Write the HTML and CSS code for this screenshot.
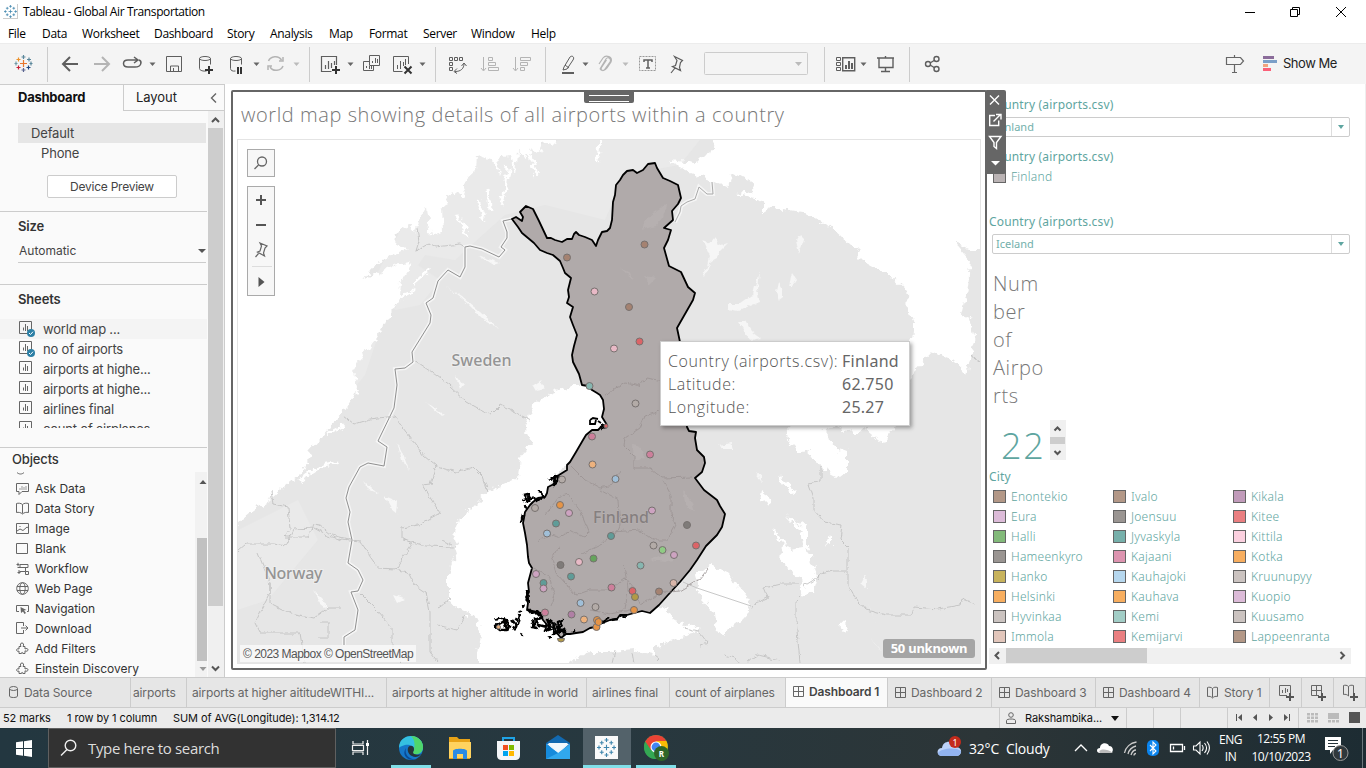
FILE: index.html
```html
<!DOCTYPE html>
<html lang="en">
<head>
<meta charset="utf-8">
<title>Tableau - Global Air Transportation</title>
<link rel="stylesheet" href="styles.css">
</head>
<body>
<svg class="defs" width="0" height="0" aria-hidden="true">
  <defs>
    <symbol id="sheet" viewBox="0 0 18 18"><path d="M1.500 1.500h12v12h-12zM5.500 10.500v-3M7.500 11v-7M9.500 11v-5"/></symbol>
    <symbol id="check" viewBox="0 0 8 8"><circle cx="4" cy="4" r="4" fill="#2c7fa5"/><path d="M2 4l1.500 1.500L6 2.700" fill="none" stroke="#fff"/></symbol>
    <symbol id="grid" viewBox="0 0 11 11"><path d="M.5.5h10v10H.5zM5.500.5v10M.5 5.500h10" fill="none" stroke="#666"/></symbol>
    <symbol id="mark" viewBox="0 0 24 24"><path d="M12 8.500v7M8.500 12h7M12 0v5M9.500 2.500h5M12 19v5M9.500 21.500h5M2.500 9.500v5M0 12h5M21.500 9.500v5M19 12h5M6 3.500v5M3.500 6h5M18 3.500v5M15.500 6h5M6 15.500v5M3.500 18h5M18 15.500v5M15.500 18h5" fill="none" stroke="#3f86ad" stroke-width="1.400"/></symbol>
    <symbol id="puzzle" viewBox="0 0 13 13"><path d="M3 4.500h2C3.800 2.500 4.500 1 6 1s2.200 1.500 1 3.500h2V7c1.500-1 3-.5 3 .8S10.500 9.700 9 8.800v2.700H6.800c.5-1.500-1.800-1.500-1.300 0H3V9C1.500 9.700.6 9 .6 8S1.500 6.500 3 7z" fill="none" stroke="#666"/></symbol>
    <filter id="rough" x="-5%" y="-5%" width="110%" height="110%"><feTurbulence type="fractalNoise" baseFrequency=".13" numOctaves="4" seed="7"/><feDisplacementMap in="SourceGraphic" scale="11" xChannelSelector="R" yChannelSelector="G"/></filter>
    <filter id="rough2" x="-5%" y="-5%" width="110%" height="110%"><feTurbulence type="fractalNoise" baseFrequency=".16" numOctaves="3" seed="3"/><feDisplacementMap in="SourceGraphic" scale="5" xChannelSelector="R" yChannelSelector="G"/></filter>
  </defs>
</svg>

<header class="titlebar">
  <span class="applogo"><svg width="13" height="13"><use href="#mark"/></svg></span>
  <span class="apptitle">Tableau - Global Air Transportation</span>
  <svg class="winbtns" width="106" height="20" viewBox="1245 0 106 20" fill="none" stroke="#000"><path d="M1245 10.500h10M1290.500 7.500h7v7h-7zM1292.500 7.500v-2h7v7h-2M1336 5l10 10M1346 5l-10 10"/></svg>
</header>
<nav class="menubar"><span>File</span><span>Data</span><span>Worksheet</span><span>Dashboard</span><span>Story</span><span>Analysis</span><span>Map</span><span>Format</span><span>Server</span><span>Window</span><span>Help</span></nav>

<div class="toolbar">
  <svg class="tools" width="984" height="40" viewBox="0 44 984 40" fill="none" stroke="#5e5e5e">
    <g stroke="#ccc"><path d="M47.500 47v35M309.500 47v35M435.500 47v35M545.500 47v35M824.500 47v35M909.500 47v35"/></g>
    <g stroke-width="1.200">
      <path stroke="#e8762d" d="M23.500 60v7M20 63.500h7"/><path stroke="#5b879b" d="M23.500 55v4M21.500 57h4M29 57.500v4M27 59.500h4M31 61.500v4M29.500 63.500h3"/>
      <path stroke="#eb912c" d="M18.500 57.500v4M16.500 59.500h4"/><path stroke="#7199a6" d="M16 61.500v4M14.500 63.500h3"/><path stroke="#c72035" d="M18.500 65.500v4M16.500 67.500h4"/><path stroke="#1f457e" d="M28.500 65.500v4M26.500 67.500h4"/><path stroke="#5b6591" d="M23.500 68v4M21.500 70h4"/>
    </g>
    <path stroke-width="2" d="M78 64H63M70 57l-7 7 7 7"/><path stroke="#b4b4b4" stroke-width="2" d="M94 64h15M102 57l7 7-7 7"/>
    <path stroke-width="1.500" d="M135 67h-7c-6 0-6-7 0-7h9M134 57l4 3-4 3M135 67c7 0 7-6 4-7"/>
    <path d="M166.500 56.500h15v15h-15zM170.500 71v-5h8v5M173.500 68v3"/>
    <path d="M199.500 58.500v10c0 2 4 3 7 2.500M210.500 58.500v6"/><ellipse cx="205" cy="58.500" rx="5.500" ry="2"/>
    <path stroke="#333" stroke-width="2" d="M209 66v8M205 70h8"/>
    <path d="M230.500 58.500v10c0 2 2 3 5 2.500M241.500 58.500v6"/><ellipse cx="236" cy="58.500" rx="5.500" ry="2"/><path stroke="#333" stroke-width="2" d="M238 67v7M241 67v7"/>
    <path stroke="#b4b4b4" stroke-width="1.500" d="M268.500 61c2-5 10-6 13-1M283 66c-2 5-10 6-13 1M283 57v4h-4M268 70v-4h4"/>
    <path d="M336.500 65v-8.500h-15v15h10M325.500 69v-4M328.500 69v-8M331.500 68v-5M334.500 65v-4" stroke-width="1.200"/><path stroke="#333" stroke-width="2" d="M336 66v8M332 70h8"/>
    <path d="M369.500 55.500h10v10h-10zM369 61.500h-5.500v9h10V66M372.500 63v-2M375.500 63v-5M377.500 63v-4M366.500 68v-2M369.500 69v-3M371.500 69v-3"/>
    <path d="M408.500 64v-7.500h-15v15h9M397.500 69v-4M400.500 69v-8M403.500 66v-4M405.500 65v-6"/><path stroke="#333" stroke-width="2" d="M404.500 66.500l7 7M411.500 66.500l-7 7"/>
    <path d="M449.500 57.500h3v3h-3zM454.500 57.500h3v3h-3zM459.500 57.500h3v3h-3zM449.500 62.500h3v3h-3zM449.500 67.500h3v3h-3zM455 71.500c6 0 9-3 9-8M457 68.500l-3 3 3 2M461.500 66l2.500-3 2.500 3"/>
    <g stroke="#b4b4b4"><path d="M483.500 57v13M481 68l2.500 3 2.500-3M488.500 57.500h4v3h-4zM488.500 62.500h7v3h-7zM488.500 67.500h10v3h-10zM515.500 57v13M513 68l2.500 3 2.500-3M520.500 57.500h10v3h-10zM520.500 62.500h7v3h-7zM520.500 67.500h4v3h-4z"/><path stroke-width="1.200" d="M600 69l6-10c2-3 6 0 4 3l-5 7c-2 3-5 1-3.500-1.500l5-7.500M599 64l4-6c3-4 10-1 8 4l-4 6c-2 3-5 3-7 1"/></g>
    <path d="M564 67l6-10c2-2 5 0 3 3l-6 9-4 1zM565 65l4 3"/><path stroke-width="2" d="M562 73h12"/>
    <rect x="639.500" y="56.500" width="16" height="14" stroke-dasharray="2 1" stroke="#999"/><path stroke-width="1.500" d="M644 62v-2h8v2M648 60v8M646 68h4"/>
    <path d="M674.500 56.500l8 4-2 2-1 5 1 3-8-4 3-1 1.500-5zM675 68l-4 5" stroke-width="1.200"/>
    <rect x="704.500" y="52.500" width="103" height="22" rx="1" stroke="#ccc"/>
    <path d="M836.500 57.500h4v3h-4zM836.500 62.500h4v3h-4zM836.500 67.500h4v3h-4z"/><path stroke-width="1.400" d="M842.700 57.700h12v13h-12z"/><path stroke-width="2" d="M846 69v-4M849 69v-8M852 69v-6"/>
    <path stroke-width="1.400" d="M877 58h17M879 58v9.500h14V58M885.500 56v2M885.500 67v4M881 71.500h9"/>
    <g stroke-width="1.400"><circle cx="928" cy="64" r="2.500"/><circle cx="936.500" cy="59" r="2.500"/><circle cx="936.500" cy="69" r="2.500"/><path d="M930 63l5-3M930 65l5 3"/></g>
    <g stroke="none" fill="#666"><path d="M149.500 62.500h6l-3 3.500zM253.500 62.500h6l-3 3.500zM347.500 62.500h6l-3 3.500zM419.500 62.500h6l-3 3.500zM582.500 62.500h6l-3 3.500zM860.500 62.500h6l-3 3.500z"/><path fill="#bbb" d="M293.500 62.500h6l-3 3.500zM622.500 62.500h6l-3 3.500zM795 62h7l-3.500 4z"/></g>
  </svg>
  <div class="showme">
    <svg width="56" height="24" viewBox="1224 51 56 24"><path d="M1234.500 55v3M1234.500 65v8M1232 72.500h5M1226.500 57.500h14l3 3.500-3 3.500h-14z" fill="none" stroke="#666" stroke-width="1.200"/><path fill="#8b6c9a" d="M1263 56h11v3h-11z"/><path fill="#7b9fc8" d="M1263 60h14v3h-14z"/><path fill="#f1a37e" d="M1263 64h5v3h-5z"/><path fill="#fb6078" d="M1263 68h8v3h-8z"/></svg>
    <span>Show Me</span>
  </div>
</div>

<main class="body">
  <aside class="side">
    <div class="sidetabs"><b>Dashboard</b><span>Layout<svg width="8" height="12"><path d="M6 1.500L1.500 6 6 10.500" fill="none" stroke="#666" stroke-width="1.400"/></svg></span></div>
    <div class="sidebody">
      <div class="panel">
        <div class="devices"><div class="dev on">Default</div><div class="dev sub">Phone</div><button class="preview">Device Preview</button></div>
        <div class="size"><h3>Size</h3><div class="select">Automatic<i class="tri"></i></div></div>
        <div class="sheets"><h3>Sheets</h3>
          <div class="sheetlist">
            <div class="srow hl"><svg class="ic"><use href="#sheet"/><use href="#check" x="9" y="9" width="8" height="8"/></svg>world map ...</div>
            <div class="srow"><svg class="ic"><use href="#sheet"/><use href="#check" x="9" y="9" width="8" height="8"/></svg>no of airports</div>
            <div class="srow"><svg class="ic"><use href="#sheet"/></svg>airports at highe...</div>
            <div class="srow"><svg class="ic"><use href="#sheet"/></svg>airports at highe...</div>
            <div class="srow"><svg class="ic"><use href="#sheet"/></svg>airlines final</div>
            <div class="srow"><svg class="ic"><use href="#sheet"/></svg>count of airplanes</div>
          </div>
        </div>
        <div class="objects"><h3>Objects</h3>
          <div class="objwrap">
            <div class="objlist">
              <svg class="peek" width="13" height="6" fill="none" stroke="#666"><path d="M1 .5c2 2 5 2 7 0"/></svg>
              <div class="orow"><svg class="oi"><path d="M.5 1.500h12v8H6l-3 3v-3H.5z"/><path d="M4 8V6M6 8V4M8 8V5M10 8V4" stroke="#999"/></svg>Ask Data</div>
              <div class="orow"><svg class="oi"><path d="M6.500 2.500C5 1 2 1 .5 1.500v9c2-.5 4.500 0 6 1.500 1.500-1.500 4-2 6-1.500v-9c-2-.5-4.500-.5-6 1zM6.500 2.500v9"/></svg>Data Story</div>
              <div class="orow"><svg class="oi"><path d="M.5 1.500h12v10H.5zM1 9l3-2 3 1.500L11 5l1.500 1M3.500 4.500h1"/></svg>Image</div>
              <div class="orow"><svg class="oi"><path d="M.5 1.500h11v10H.5z"/></svg>Blank</div>
              <div class="orow"><svg class="oi"><path d="M4 2.500h8v3h-8zM1.500 5.500h8v4h-6M2 .8v3.400M.5 2.500h3M9.500 9.500v3h3v-3zM3 8v4M1.500 10.500h3"/></svg>Workflow</div>
              <div class="orow"><svg class="oi"><circle cx="6.500" cy="6.500" r="5.800"/><ellipse cx="6.500" cy="6.500" rx="2.700" ry="5.800"/><path d="M1 4.500h11M1 8.500h11"/></svg>Web Page</div>
              <div class="orow"><svg class="oi"><path d="M3 9.500H.5v-6h12v6H11"/><path d="M4.500 5l6 3-2.500.5L10 11 8.500 12 7 9.500 5 11z" fill="#666" stroke="none"/></svg>Navigation</div>
              <div class="orow"><svg class="oi"><path d="M7.500 4V.5h-7v11h7V8M5 6h7M9.500 3.500L12 6 9.500 8.500"/></svg>Download</div>
              <div class="orow"><svg class="oi"><use href="#puzzle"/></svg>Add Filters</div>
              <div class="orow"><svg class="oi"><use href="#puzzle"/></svg>Einstein Discovery</div>
            </div>
            <div class="minibar"><svg width="12" height="204"><path d="M4.500 11h7L8 7z" fill="#555"/><path d="M2 65h10v123H2z" fill="#c1c1c1"/><path d="M4.500 194h7L8 198z" fill="#999"/></svg></div>
          </div>
        </div>
      </div>
      <div class="bigbar"><svg width="15" height="566" fill="none" stroke="#555" stroke-width="2"><path d="M0 17h15v478H0z" fill="#cdcdcd" stroke="none"/><path d="M4 11l3.500-3.500L11 11M4 555.500l3.500 3.500 3.500-3.500"/></svg></div>
    </div>
  </aside>

  <section class="work">
    <div class="sheetframe">
      <div class="grip"></div>
      <div class="frametools"><svg width="21" height="84" fill="none" stroke="#fff" stroke-width="1.400"><path d="M5 5.500l9 9M14 5.500l-9 9M10 25.500H4.700v10h9v-5M8.500 31.500l7-7M11 24.500h5v5M4.500 46.500h11.500l-4.500 6v6l-2.500-2v-4z"/><path d="M6 71h9l-4.500 4.500z" fill="#fff" stroke="none"/></svg></div>
      <h1>world map showing details of all airports within a country</h1>
      <div class="mapwrap">
        <svg class="map" width="742" height="523" viewBox="238 140 742 523">
          <rect x="238" y="140" width="742" height="523" fill="#e6e6e6"/>
          <g fill="#eeeeee" opacity=".5"><path d="M560 140l140 0-20 25-55 10-20 45-60-15-40 10-50 45-30-5-40 60-20 60-50 60-80 60v-20l120-160 80-150z"/><path d="M238 530l60-30 20 40-50 60-30 10zM410 260l30 20-20 25-25 5z"/></g>
          <g fill="#fff" filter="url(#rough)">
            <path d="M230 130H563L555 145 545 142 540 152 530 148 526 158 517 152 515 175 510 155 497 157 500 175 492 160 477 155 476 170 463 182 467 197 450 193 442 208 443 233 430 236 428 222 426 208 420 216 413 232 408 226 395 234 394 243 406 250 392 256 377 262 365 280 372 276 400 262 412 265 401 282 400 298 390 315 377 338 363 355 353 372 357 390 343 413 330 428 310 450 305 470 273 497 250 513 230 530z"/>
            <path d="M715 130L714 150 700 158 695 163 670 160 677 167 697 175 713 180 728 187 733 172 755 184 752 191 737 193 763 202 763 217 770 207 800 212 827 225 850 245 867 262 887 273 907 292 908 312 914 322 912 338 905 360 880 375 840 374 815 360 800 380 785 412 790 443 800 453 810 452 820 467 840 477 848 470 848 452 840 449 837 453 823 430 835 425 850 433 867 430 883 443 895 427 900 400 913 372 932 352 953 360 967 375 975 335 970 318 962 315 968 288 970 262 953 242 967 248 990 248 990 130z"/>
            <path d="M582 385L573 385 547 395 532 407 525 430 532 443 520 457 518 477 493 488 477 503 460 520 453 540 457 553 448 573 448 598 457 608 475 617 482 637 478 653 478 675H560L570 662 590 652 610 652 633 650 655 655 655 647 683 638 700 628 672 620 668 607 650 610 600 600 560 600 550 480 610 430 615 390z"/>
            <path d="M695 577L710 565 733 577 750 602 747 617 733 625 723 635 717 633 715 613 700 597zM785 515L807 527 807 547 818 577 813 593 803 597 800 577 782 563 783 543 770 530 777 532 790 550 803 548 800 530zM778 475l8 5 6 10 6 2-5 4-5-3-7-12zM762 490l10 8-4 6-8-3zM828 535l4 2 0 8-5-2zM836 625l8-4 6 6-5 6z"/>
            <path fill="none" stroke="#fff" stroke-width="3" d="M508 168l-3 22-4 14M488 190l2 20M478 200l7 20M457 215l12 22M530 150l6 26M600 140l-2 20M300 480l22-14 16-4M345 425l-18 10M400 300l14-10M412 285l18-16"/>
          </g>
          <g fill="#f6f6f6" filter="url(#rough2)"><path d="M703 240l8 3 4-5 3 8 10-3-8 8-4 8-6 4-3 10-5 3 6-10 2-10zM753 295l6-25-2 20 3 12-12 4-10 5-10-2 0-5 12 0zM800 235l4 4-5 14-3-12zM792 273l4 6-5 8-2 0zM738 321l8 0 6 10 10 8-12 2zM778 283l5 8 0 6-4 3-3-8zM755 472l7 3 0 6zM865 576l2 5 0 8-6-5zM718 445l14-2 2 6-9 0zM868 603l7 20-4-12zM870 638l12 14-4-4z"/></g>
          <g fill="#f7f7f7" filter="url(#rough2)"><path d="M447 287l15 10 18 15 12 10 6 6-14-8-18-18zM397 442l5 10 7 18-7-10zM384 496l14 6-1 12-6-5zM363 480l8 8 8 6-10-4zM426 402l18 12-4 1zM393 595l12 4-8 4zM313 590l10 10 6 10-8-6zM478 255l22 8-6 2zM455 375l8 10-3 4zM533 386l8-5 5 8-10 2z"/></g>
          <g fill="none" stroke="#f5f5f5" stroke-width="4"><path d="M512 219L503 221 507 232 507 238 501 247 505 250 499 257 482 249 470 246 465 247 465 267 460 277 448 270 438 281 433 298 426 303 431 315 430 323 412 352 413 362 405 368 395 369 397 385 394 408 378 441 387 447 384 466 368 463 360 467 349 487 346 498 350 512 348 522 352 540 348 563 358 570 363 580 358 591 351 592 358 610 355 630 344 637 344 645"/><path d="M675 222l5-10 1-6 6-4 8-3 4-12 8 7 6 0-1-12"/></g>
          <path fill="none" stroke="#8f8f8f" d="M512 219L503 221 507 232 507 238 501 247 505 250 499 257 482 249 470 246 465 247 465 267 460 277 448 270 438 281 433 298 426 303 431 315 430 323 412 352 413 362 405 368 395 369 397 385 394 408 378 441 387 447 384 466 368 463 360 467 349 487 346 498 350 512 348 522 352 540 348 563 358 570 363 580 358 591 351 592 358 610 355 630 344 637 344 645"/>
          <path fill="none" stroke="#aaa" d="M675 222l5-10 1-6 6-4 8-3 4-12 8 7 6 0-1-12"/>
          <path fill="none" stroke="#bdbdbd" stroke-width=".8" filter="url(#rough2)" d="M465 247l-5-3-25 3-7-3-12 7 3-10-2-13M413 360l20 13 16 12 18 17 23 13 10-10 30 15M394 416l-24 3-16 5-10-8M394 416l30 40 12 10 20 6 17-5 10 10 5 15M436 466l-6 18-8 1 18 28-22 12-16 3 0 10 10 6-8 12-8 13-18-1-18-26-18-2-14-4-14-8-20 1-8 17-12-2-28 0-14 12-16 1M442 540l10 5M403 540l24 6 28 1M352 540l-20-5-12-10-6-1-6 13-24 0 6-8-2-22-15-3-2-13M394 569l14 3 6 12 12 8 4 20 0 40 8 10M358 591l20 20 14 17 0 25 10 10M437 608l14-10M437 625l20 5 8-14M258 553l12 30 0 20 20 10 24 5 14-10 14 0M270 583l0 10-15 30 5 10 40 0 5 30M320 622l8 0 0 16-10 0M821 466l0 15-12 3 5 14 0 12 10 12 18 3-2 15 8 8 0 38 6 10 12 14 20 5 26 0 2-8 24 2 22-4 2-6 14 5M847 571l-14 0-12 3-3 6M800 597l-4 4 0 20 3 30 1 12M798 584l-18 0-16 4 4 10-15 6-2 5M804 586l16-10M684 628l14 3 10 12-8 3M725 655l10 3 5 6M748 661l10-6 22 5M970 355l10 8M615 650l-3 14M632 652l2 12M655 655l5 4-4 4"/>
          <path fill="none" stroke="#c8c8c8" d="M683 582l14 6 54 18"/>
          <g>
            <path class="finland" d="M512 219L516 217 522 221 523 217 520 212 526 206 533 209 539 221 547 238 551 238 555 240 562 242 567 239 572 239 574 234 576 232 579 235 585 237 592 240 596 246 598 240 602 232 607 231 610 228 612 220 613 202 615 195 616 185 620 180 623 175 627 171 633 170 637 173 643 170 648 164 655 163 657 168 663 178 670 181 678 185 681 198 678 204 672 211 673 220 664 228 671 230 668 240 664 248 669 266 681 272 688 287 695 293 693 300 677 328 680 342 690 370 684 400 687 427 689 431 696 432 695 438 697 450 704 457 705 463 702 472 695 478 704 490 717 500 720 506 725 514 722 527 717 535 706 546 697 560 690 570 680 582 668 595 659 605 650 613 642 611 638 612 627 615 620 615 617 619 610 620 600 624 595 627 590 628 583 632 576 633 570 634 566 634 561 638 556 632 555 628 548 626 543 620 541 616 537 612 527 610 528 603 526 597 529 592 528 583 532 568 529 563 528 557 527 545 525 533 523 523 524 518 525 512 530 505 533 502 538 498 545 497 547 493 548 487 554 484 555 477 559 475 567 470 567 465 570 462 576 452 583 440 586 435 592 430 598 430 602 426 607 425 602 417 604 409 603 400 600 395 597 393 592 390 588 386 582 385 579 374 573 362 572 355 574 346 577 335 573 325 570 317 573 307 567 303 569 297 568 290 570 282 571 278 565 273 563 268 560 261 553 255 547 253 540 250 534 243 528 238 522 233 518 227z"/>
            <path fill="#bcb6b6" opacity=".5" filter="url(#rough2)" d="M643 225l10-12 15-10-5 14-8 9-14 4zM633 445l7 2 4 10-10 3zM620 268l10 5 3 6zM644 276l12 2-6 6zM683 490l8 10 4 12-10-8zM650 560l20-8 10 6-15 4z"/>
            <path fill="none" stroke="#9a9393" stroke-width=".8" filter="url(#rough2)" d="M605 395l20-12 15 3 6-8 18 3M660 411l-15 5-5 12-15 10-1 8 10 10 0 12 16 0 12 10 30-1M620 470l-8 15-12 3-15-8-14-14M545 515l14-18 8-3 14 18 8 20-5 5-12-6-14 6-8-2-12 6M600 490l18 10 2 25-5 12M663 480l8 15 0 18 5 12-8 15-14 0-14-10-28 2-10 12-20 10M560 545l-8 14 4 14 20 22 14-5 20 0 15-12 10 12 5 15 20-12 20-2 20-12 8-10M624 565l4 24-3 20M590 610l20 4 25-5M531 568l18 8 6 20-4 10"/>
            <g fill="none" stroke="#000" stroke-width="2.600" stroke-linejoin="round" filter="url(#rough2)">
              <path d="M525 505l1 4M533 497l-4 4-3-3-2-3 4-1 2 5M534 497l3 4 6-5-3-4 4 6M549 480l6-4-1 8 5-5-6-4M601 424l5 3-5 1M528 608l4 5 5-1 5 5-7 3 4 5 8 2-2 4 6-2-4-10 8 6-1 9 5-4-2-8 6-2-6 13 8-5M531 622l4 2-3 3 6 1M494 621l5-3 7 2 3 5-2 5-7 0-5-4 9-5 3 8M512 620l5 6-4 4M520 615l-3 12M548 638l4-2M559 629l7 4M572 632l4-2M603 622l6-4M612 620l6-1M621 616l5 1M523 515l-2 8M527 590l1 13"/>
              <path stroke-dasharray="3 5" d="M512 628l6-12 4-10 6-2M520 634l4 2M523 502l3-6"/>
            </g>
            <path fill="none" stroke="#000" stroke-width="1.800" d="M590 420l3-2 5 1M590 420v4h5l1-4M598 421l3 2"/>
          </g>
          <g class="country"><text x="451.500" y="365.500" textLength="60">Sweden</text><text x="264.500" y="579" textLength="58">Norway</text><text x="593" y="523" textLength="56" class="dim">Finland</text></g>
          <g class="dots">
            <g fill="#a58271"><circle cx="567" cy="257.500" r="3.500"/><circle cx="644.500" cy="244.500" r="3.500"/><circle cx="629" cy="307" r="3.500"/><circle cx="659" cy="591.500" r="3.500"/></g>
            <g fill="#e8b9c6"><circle cx="594.500" cy="291.500" r="3.500"/><circle cx="614" cy="348.500" r="3.500"/><circle cx="579" cy="562" r="3.500"/></g>
            <g fill="#dc6467"><circle cx="639.500" cy="341.500" r="3.500"/><circle cx="696" cy="545.500" r="3.500"/><circle cx="632.500" cy="591" r="3.500"/><circle cx="606" cy="426" r="2"/></g>
            <g fill="#86b6b0"><circle cx="589.500" cy="386" r="3.500"/><circle cx="640.500" cy="565.500" r="3.500"/></g>
            <g fill="#cd7f9b"><circle cx="592" cy="436.500" r="3.500"/><circle cx="650" cy="454.500" r="3.500"/><circle cx="611.500" cy="587.500" r="3.500"/><circle cx="545" cy="612.500" r="3.500"/></g>
            <g fill="#edb27e"><circle cx="592.500" cy="464.500" r="3.500"/><circle cx="584" cy="619.500" r="3.500"/><circle cx="498.500" cy="627" r="2"/></g>
            <g fill="#b3aba7"><circle cx="562" cy="479.500" r="3.500"/><circle cx="535" cy="508" r="3.500"/><circle cx="635.500" cy="403.500" r="3.500"/><circle cx="653.500" cy="545.500" r="3.500"/><circle cx="595.500" cy="607" r="3.500"/></g>
            <g fill="#e69446"><circle cx="560" cy="505" r="3.500"/><circle cx="596.500" cy="627" r="3.500"/><circle cx="597" cy="620" r="3.500"/><circle cx="598.500" cy="622" r="3.500"/><circle cx="634" cy="610" r="3.500"/></g>
            <g fill="#cda3c1"><circle cx="569" cy="513" r="3.500"/><circle cx="536" cy="574" r="3.500"/><circle cx="652" cy="510.500" r="3.500"/><circle cx="674" cy="555" r="3.500"/></g>
            <g fill="#5f9c98"><circle cx="556" cy="523.500" r="3.500"/><circle cx="611" cy="536" r="3.500"/><circle cx="571" cy="576.500" r="3.500"/><circle cx="543.500" cy="583" r="3.500"/></g>
            <g fill="#a0bfd8"><circle cx="547" cy="533.500" r="3.500"/><circle cx="580.500" cy="603" r="3.500"/><circle cx="615.500" cy="479" r="3.500"/></g>
            <g fill="#7f7b79"><circle cx="560.500" cy="565" r="3.500"/><circle cx="687" cy="525" r="3.500"/></g>
            <circle cx="543.500" cy="588.500" r="3.500" fill="#cda3c1"/><circle cx="571.500" cy="614.500" r="3.500" fill="#b07fa5"/><circle cx="593.500" cy="558.500" r="3.500" fill="#65a45c"/><circle cx="662.500" cy="550" r="3.500" fill="#8fcb84"/><circle cx="635" cy="597" r="3.500" fill="#b29a45"/><circle cx="673.500" cy="583" r="3.500" fill="#d8b5a9"/><path d="M557.500 638.500a3.500 3.500 0 0 0 7 0z" fill="#b29a45"/>
          </g>
        </svg>
        <div class="mapsearch"><svg width="26" height="26" fill="none" stroke="#666" stroke-width="1.300"><circle cx="14" cy="11.500" r="4.500"/><path d="M10.500 15l-4 4"/></svg></div>
        <div class="mapzoom"><svg width="26" height="108" fill="none" stroke="#555" stroke-width="2"><path d="M8 13h10M13 8v10M8 38h10"/><path d="M4 79.500h20" stroke="#ddd" stroke-width="1"/><path d="M12 56l7 3-2 2-1.500 5 1 3-7-4 2.500-1 1.500-5zM10.500 66.500l-3 3.500" stroke="#666" stroke-width="1.200"/><path d="M10.500 90v10l6-5z" fill="#555" stroke="none"/></svg></div>
        <div class="credit">© 2023 Mapbox © OpenStreetMap</div>
        <div class="unknown">50 unknown</div>
        <div class="tooltip"><span>Country (airports.csv):</span><b>Finland</b><span>Latitude:</span><b>62.750</b><span>Longitude:</span><b>25.27</b></div>
      </div>
    </div>

    <div class="right">
      <h4 class="l1">Country (airports.csv)</h4>
      <div class="drop"><span>Finland</span><i></i></div>
      <h4 class="l2">Country (airports.csv)</h4>
      <div class="key solo"><i class="sw c-sand"></i>Finland</div>
      <h4 class="l3">Country (airports.csv)</h4>
      <div class="drop"><span>Iceland</span><i></i></div>
      <div class="count">Num<br>ber<br>of<br>Airpo<br>rts</div>
      <div class="numrow"><span class="num">22</span><svg width="16" height="40"><path fill="#f0f0f0" d="M0 0h16v40H0z"/><path fill="#cdcdcd" d="M0 17h15v7H0z"/><path d="M4.500 10.500l3-3 3 3M4.500 31l3 3 3-3" fill="none" stroke="#555" stroke-width="2"/></svg></div>
      <h4 class="l4">City</h4>
      <div class="legend">
        <div class="key"><i class="sw c-brown"></i>Enontekio</div><div class="key"><i class="sw c-brown"></i>Ivalo</div><div class="key"><i class="sw c-purple"></i>Kikala</div>
        <div class="key"><i class="sw c-lilac"></i>Eura</div><div class="key"><i class="sw c-gray"></i>Joensuu</div><div class="key"><i class="sw c-red"></i>Kitee</div>
        <div class="key"><i class="sw c-green"></i>Halli</div><div class="key"><i class="sw c-teal"></i>Jyvaskyla</div><div class="key"><i class="sw c-blush"></i>Kittila</div>
        <div class="key"><i class="sw c-gray"></i>Hameenkyro</div><div class="key"><i class="sw c-pink"></i>Kajaani</div><div class="key"><i class="sw c-orange"></i>Kotka</div>
        <div class="key"><i class="sw c-gold"></i>Hanko</div><div class="key"><i class="sw c-blue"></i>Kauhajoki</div><div class="key"><i class="sw c-stone"></i>Kruunupyy</div>
        <div class="key"><i class="sw c-orange"></i>Helsinki</div><div class="key"><i class="sw c-orange"></i>Kauhava</div><div class="key"><i class="sw c-lilac"></i>Kuopio</div>
        <div class="key"><i class="sw c-stone"></i>Hyvinkaa</div><div class="key"><i class="sw c-mint"></i>Kemi</div><div class="key"><i class="sw c-stone"></i>Kuusamo</div>
        <div class="key"><i class="sw c-peach"></i>Immola</div><div class="key"><i class="sw c-red"></i>Kemijarvi</div><div class="key"><i class="sw c-brown"></i>Lappeenranta</div>
      </div>
      <svg class="hbar" width="362" height="16"><path fill="#f0f0f0" d="M0 0h362v16H0z"/><path fill="#cdcdcd" d="M17 0h141v15H17z"/><path d="M10 4L6.500 7.500 10 11M351.500 4l3.500 3.500-3.500 3.500" fill="none" stroke="#555" stroke-width="2"/></svg>
    </div>
  </section>
</main>

<nav class="tabs">
  <div class="t1"><svg width="10" height="13" fill="none" stroke="#666"><path d="M.5 3v7c0 2 8 2 8 0V3"/><ellipse cx="4.500" cy="2.500" rx="4" ry="2"/></svg>Data Source</div>
  <div class="t2">airports</div><div class="t3">airports at higher aititudeWITHI...</div><div class="t4">airports at higher altitude in world</div><div class="t5">airlines final</div><div class="t6">count of airplanes</div>
  <div class="act"><svg width="11" height="11"><use href="#grid"/></svg>Dashboard 1</div>
  <div><svg width="11" height="11"><use href="#grid"/></svg>Dashboard 2</div><div><svg width="11" height="11"><use href="#grid"/></svg>Dashboard 3</div><div><svg width="11" height="11"><use href="#grid"/></svg>Dashboard 4</div>
  <div class="story"><svg width="12" height="13" fill="none" stroke="#666"><path d="M5.500 2.500C4 1 2 1 .5 1.500v9c2-.5 3.500 0 5 1.500 1.500-1.500 3-2 5-1.500v-9c-2-.5-3.500-.5-5 1zM5.500 2.500v9"/></svg>Story 1</div>
  <div class="new"><svg width="17" height="18" fill="none" stroke="#666"><path d="M9 11.500H1.500v-10h11V9M4.500 9V6M7.500 9V4M9.500 8V5"/><path d="M12 9v8M8 13h8" stroke="#555" stroke-width="2"/></svg></div>
  <div class="new"><svg width="17" height="18" fill="none" stroke="#666"><path d="M9 11.500H1.500v-10h10V9M6.500 1.500v10M1.500 6.500h10"/><path d="M12 9v8M8 13h8" stroke="#555" stroke-width="2"/></svg></div>
  <div class="new"><svg width="17" height="18" fill="none" stroke="#666"><path d="M6.500 2.500C5 1 3 1 1.500 1.500v9c2-.5 3.500 0 5 1.500V2.500c1.500-1.500 3-1.500 5-1V9"/><path d="M12 9v8M8 13h8" stroke="#555" stroke-width="2"/></svg></div>
</nav>
<div class="status">
  <span class="m1">52 marks</span><span class="m2">1 row by 1 column</span><span class="m3">SUM of AVG(Longitude): 1,314.12</span>
  <div class="user"><svg width="10" height="13" fill="none" stroke="#666"><circle cx="5" cy="3" r="2.300"/><path d="M.5 11.500v-3c0-2 9-2 9 0v3z"/></svg>Rakshambika...<i class="blk"></i></div><div class="cell"></div><div class="cell"></div><div class="cell3"></div>
  <svg width="139" height="20" viewBox="1227 708 139 20" fill="#555"><path d="M1227 708h1v20h-1zM1298 708h1v20h-1z" fill="#ccc"/><path d="M1236 714h1v7h-1zM1242 714v7l-4-3.500zM1257 714v7l-4-3.500zM1269 714v7l4-3.500zM1284 714v7l4-3.500zM1289 714h1v7h-1z"/><path fill="#bbb" d="M1307 713h3v2.500h-3zM1311 713h3v2.500h-3zM1315 713h3v2.500h-3zM1307 716.500h3v2.500h-3zM1311 716.500h3v2.500h-3zM1315 716.500h3v2.500h-3zM1307 720h3v2.500h-3zM1311 720h3v2.500h-3zM1315 720h3v2.500h-3zM1328 713h11v6h-11zM1328 720h3v2.500h-3zM1332 720h3v2.500h-3zM1336 720h3v2.500h-3z"/><path d="M1349 712h11v11h-11z"/></svg>
</div>

<footer class="taskbar">
  <svg class="win" width="48" height="40" fill="#fff"><path d="M16 14.300l7-1V20h-7zM24 13.200l8-1.200v8h-8zM16 21h7v6.700l-7-1zM24 21h8v8l-8-1.200z"/></svg>
  <div class="search"><svg width="18" height="18" fill="none" stroke="#eee" stroke-width="1.400"><circle cx="10.500" cy="6.500" r="5.300"/><path d="M7 10.500l-6 6"/></svg>Type here to search</div>
  <svg width="344" height="40" viewBox="336 728 344 40">
    <path d="M353 741v3h10v-3M353 755v-3h10v3M352.500 745.500h11v5h-11zM367.500 740v3M367.500 746v9" fill="none" stroke="#eee" stroke-width="1.200"/><path d="M366 743h3v3h-3z" fill="#fff"/>
    <circle cx="411" cy="748" r="12" fill="#1577c9"/><path d="M399 748c0-9 7-12 12-12 8 0 12 6 12 11 0 6-5 8-9 7-2-1-1-2 0-4 0-4-5-6-9-5-3 1-6 2-6 3z" fill="#35c1e1"/><path d="M411 736c8 0 12 6 12 11 0 6-5 8-9 7-2-1-1-2 0-4 1-5 1-10-3-14z" fill="#4fd66b"/><path d="M406 748c-2 7 4 12 10 11-8 3-15-4-10-11z" fill="#084a96"/><path d="M408 748c1-3 6-3 6 1 0 3-2 3 0 5 3 1 5 1 7 0-2 3-6 4-9 2-3-1-5-5-4-8z" fill="#26343b"/>
    <path d="M449 737h8l2 2h11v20h-21z" fill="#e8a317"/><path d="M449 742h22v16h-22z" fill="#ffd35f"/><path d="M453 759v-8c0-3 14-3 14 0v8h-4v-5h-6v5z" fill="#2b8be3"/>
    <path d="M503 741v-3h11v3" fill="none" stroke="#1fa3e6" stroke-width="2"/><path d="M497 741h23v14c0 4-2 5-5 5h-13c-3 0-5-1-5-5z" fill="#f4f6f8"/><path d="M503 745h5v5h-5z" fill="#f25022"/><path d="M509 745h5v5h-5z" fill="#7fba00"/><path d="M503 751h5v5h-5z" fill="#00a4ef"/><path d="M509 751h5v5h-5z" fill="#ffb900"/>
    <path d="M546 743l12-8 12 8v16h-24z" fill="#1269b0"/><path d="M547 744h22l-11 10z" fill="#e9f4fb"/><path d="M546 744l12 9 12-9v15h-24z" fill="#31a8ee"/><path d="M546 744l12 9-12 6z" fill="#168bdc"/><path d="M548 743h20l-10 9z" fill="#f2f8fc"/>
    <path d="M583 728h48v40h-48z" fill="#53626a"/><path d="M595 736h23v23h-23z" fill="#fafafa"/><use href="#mark" x="597" y="738" width="19" height="19"/>
    <circle cx="656" cy="747" r="12" fill="#34a853"/><path d="M645.600 741A12 12 0 0 1 666.400 741L656 743z" fill="#ea4335"/><path d="M645.600 741l5 9 5 9c-10 0-14-11-10-18z" fill="#34a853"/><path d="M645 741h11v6l-5 3z" fill="#ea4335"/><path d="M656 741h10.400c4 8-1 17-10 18l5-9z" fill="#fbbc05"/><circle cx="656" cy="747" r="5.500" fill="#fff"/><circle cx="656" cy="747" r="4.400" fill="#4285f4"/><circle cx="661.500" cy="753.500" r="7.500" fill="#2f6627"/><text x="658.700" y="757" class="ava">R</text>
    <path d="M391 765h40v3h-40zM583 765h48v3h-48zM636 765h40v3h-40z" fill="#80dfe8"/>
  </svg>
  <div class="tray">
    <svg width="28" height="26" viewBox="936 735 28 26"><path d="M942 756c-6 0-6-8 0-8 1-8 12-8 13-1 8-1 8 9 1 9z" fill="#bcd3fa"/><path d="M938 753c3-5 18-6 23-2 0 3-2 5-5 5h-14c-2 0-4-1-4-3z" fill="#92b4f1"/><circle cx="955" cy="742" r="6" fill="#c42b1c"/><text x="952.500" y="745.500" class="bd">1</text></svg>
    <span class="temp">32°C&nbsp; Cloudy</span>
    <svg width="140" height="24" viewBox="1073 736 140 24" fill="none" stroke="#fff" stroke-width="1.300"><path d="M1075 751l6-6 6 6"/><path d="M1100 753c-4 0-4-5 0-5 0-6 8-6 9-2 5 0 5 7 1 7z" fill="#fff" stroke="none"/><path d="M1100 753c-3-3 5-6 13 0z" fill="#bbb" stroke="none"/><path d="M1124.500 753c1-6 6-10 12-11M1128 754c1-4 4-7 8-8M1131 755c1-3 3-5 5-5M1134 755.500c0-1 1-2 2-2" stroke="#ccc"/><rect x="1147" y="740" width="12" height="16" rx="5" fill="#0a84ee" stroke="none"/><path d="M1150 745l6 6-3 3v-12l3 3-6 6" stroke-width="1.100"/><path d="M1170.500 744.500h12v7h-12zM1184.500 746v4M1173.500 746.500v3"/><path d="M1193.500 746h2.500l4-4v12l-4-4h-2.500zM1202 745c1.500 2 1.500 4 0 6M1204.500 743c2.500 3 2.500 7 0 10M1207 741.500c3 4 3 9 0 13" stroke-width="1.100"/></svg>
    <div class="lang">ENG<br>IN</div>
    <div class="clock"><span>12:55 PM</span><span>10/10/2023</span></div>
    <svg class="note" width="28" height="32" viewBox="1322 734 28 32"><path d="M1325 739h16v13h-8l-3 4v-4h-5z" fill="#fff"/><path d="M1328 742.500h10M1328 745.500h10M1328 748.500h7" stroke="#26343b"/><circle cx="1340.500" cy="755" r="7.500" fill="#30383c" stroke="#999"/><text x="1337" y="759.500" class="bd2">1</text></svg>
    <i class="peekline"></i>
  </div>
</footer>
</body>
</html>
```
FILE: styles.css
```css
* { box-sizing: border-box; }
body { margin: 0; width: 1366px; height: 768px; overflow: hidden; display: flex; flex-direction: column; background: #fff; font: 13px "Open Sans", "Noto Sans", sans-serif; color: #333; }
svg { display: block; flex: none; }
h1, h3, h4 { margin: 0; font-weight: 400; }
span, b, div { white-space: nowrap; }
.defs { position: absolute; }

.titlebar { height: 23px; display: flex; align-items: center; padding-left: 3px; color: #000; font-size: 12px; letter-spacing: -.4px; }
.applogo { width: 15px; height: 15px; border: 1px solid #ccc; border-width: 0 1px 1px 0; margin-right: 5px; padding: 1px; }
.apptitle { flex: 1; }
.winbtns { margin-right: 15px; }
.menubar { height: 20px; padding-left: 8px; display: grid; grid-template-columns: 34px 40px 72px 73px 43px 59px 40px 54px 48px 60px 40px; line-height: 22px; font-size: 12px; letter-spacing: -.33px; color: #000; }

.toolbar { height: 41px; background: #f4f4f4; border-top: 1px solid #ececec; display: flex; justify-content: space-between; }
.showme { display: flex; align-items: center; gap: 3px; padding: 0 29px 2px 0; font: 13px Inter, sans-serif; letter-spacing: -.45px; color: #222; }

.body { height: 593px; display: flex; }
.side { width: 225px; background: #fafafa; border: 1px solid #ccc; border-width: 1px 1px 0 0; display: flex; flex-direction: column; font-family: Inter, sans-serif; letter-spacing: -.15px; color: #444; }
.sidetabs { height: 26px; display: flex; color: #222; line-height: 25px; flex: none; }
.sidetabs b { width: 123px; padding-left: 18px; font-size: 13px; font-weight: 700; color: #111; letter-spacing: -.25px; }
.sidetabs span { flex: 1; display: flex; justify-content: space-between; align-items: center; border: 1px solid #ccc; border-width: 0 0 1px 1px; padding: 0 6px 0 12px; font-size: 13px; letter-spacing: -.05px; }
.sidebody { flex: 1; min-height: 0; display: flex; }
.panel { width: 207px; display: flex; flex-direction: column; }
.bigbar { width: 16px; margin-left: 1px; background: #f0f0f0; }
.devices { height: 100px; padding: 12px 1px 0 18px; }
.dev { height: 20px; line-height: 20px; padding-left: 13px; }
.dev.on { background: #e6e6e6; }
.dev.sub { padding-left: 23px; }
.preview { display: block; width: 130px; height: 23px; margin: 12px 0 0 29px; padding: 0; background: #fff; border: 1px solid #ccc; border-radius: 2px; font: 12px/19px Inter, sans-serif; letter-spacing: -.25px; color: #444; }
.side h3 { font-size: 13px; font-weight: 600; line-height: 20px; color: #333; }
.size { height: 73px; border-top: 1px solid #ccc; padding: 4px 1px 0 18px; }
.size h3 { height: 0; }
.select { height: 24px; margin-top: 23px; padding-left: 1px; font-size: 12px; letter-spacing: 0; border-bottom: 1px solid #ccc; display: flex; justify-content: space-between; align-items: center; }
.tri { border: 4px solid transparent; border-top-color: #555; border-bottom: 0; }
.sheets { height: 163px; border-top: 1px solid #ccc; padding-top: 4px; }
.sheets h3 { padding-left: 18px; margin-bottom: 10px; }
.sheetlist { height: 109px; overflow: hidden; }
.srow { height: 20px; display: flex; align-items: center; padding-left: 18px; font-size: 13px; letter-spacing: -.2px; }
.srow.hl { background: #f4f4f4; }
.ic { width: 18px; height: 18px; margin-right: 7px; fill: none; stroke: #666; }
.ic use[x] { stroke: none; }
.objects { flex: 1; min-height: 0; border-top: 1px solid #ccc; padding-top: 1px; }
.objects h3 { padding-left: 12px; font-weight: 500; height: 23px; }
.objwrap { display: flex; height: 205px; overflow: hidden; }
.objlist { width: 195px; padding-left: 16px; }
.orow { height: 20px; display: flex; align-items: center; gap: 6px; font-size: 12px; letter-spacing: -.03px; color: #333; }
.oi { width: 13px; height: 13px; fill: none; stroke: #666; }
.minibar { width: 12px; background: #f2f2f2; padding-top: 1px; }

.work { flex: 1; display: flex; padding: 6px 0 0 6px; background: #fff; border-right: 1px solid #eee; }
.sheetframe { position: relative; width: 756px; height: 580px; border: 2px solid #666; border-radius: 2px; padding: 0 4px; flex: none; }
.sheetframe h1 { height: 47px; padding-left: 4px; font: 300 20px/46px "Open Sans", sans-serif; color: #777; letter-spacing: .57px; }
.grip { position: absolute; left: 351px; top: 0; width: 50px; height: 11px; background: #666; border-radius: 0 0 2px 2px; }
.grip::before { content: ""; position: absolute; left: 5px; right: 5px; top: 3px; height: 5px; border: 1px solid #fff; border-width: 1px 0; }
.frametools { position: absolute; left: 752px; top: -2px; width: 21px; height: 84px; background: #666; border-radius: 2px; z-index: 3; }
.mapwrap { position: relative; width: 744px; height: 525px; border: 1px solid #e4e4e4; }
.finland { fill: #b0aaaa; stroke: #000; stroke-width: 1.8; stroke-linejoin: round; }
.country { font: 500 16px "Noto Sans", sans-serif; fill: #949494; stroke: #eee; stroke-width: 2; paint-order: stroke; }
.country .dim { fill: #857f7f; stroke: #b8b2b2; stroke-width: 1; }
.dots { stroke: #77716f; stroke-width: 1; }
.mapsearch, .mapzoom { position: absolute; left: 9px; width: 28px; background: #f7f7f7; border: 1px solid #aaa; }
.mapsearch { top: 9px; height: 28px; }
.mapzoom { top: 46px; height: 110px; }
.credit { position: absolute; left: 2px; bottom: 1px; height: 17px; padding: 2px 3px 0; background: rgba(250,250,250,.8); font: 12px/15px "Liberation Sans", sans-serif; letter-spacing: -.52px; color: #555; }
.unknown { position: absolute; right: 5px; bottom: 5px; width: 92px; height: 19px; background: #a5a5a5; border-radius: 3px; color: #fff; font: 700 13px/18px "Noto Sans", sans-serif; text-align: center; letter-spacing: -.25px; }
.tooltip { position: absolute; left: 422px; top: 201px; width: 250px; height: 85px; background: #fff; border: 1px solid #ccc; box-shadow: 2px 2px 4px rgba(0,0,0,.35); padding: 8px 7px; display: grid; grid-template-columns: 174px 1fr; grid-auto-rows: 23px; line-height: 23px; font-size: 16px; font-weight: 300; letter-spacing: .6px; color: #555; z-index: 2; }
.tooltip b { font: 400 16px/22px "Noto Sans", sans-serif; letter-spacing: .25px; color: #666; }

.right { flex: 1; padding-left: 2px; color: #5ea5a0; font-family: "Noto Sans", sans-serif; font-size: 12px; }
.right h4 { height: 18px; line-height: 18px; font-size: 12px; font-weight: 400; letter-spacing: .17px; }
.l1 { margin-top: 6px; }
.right .drop { width: 358px; height: 20px; margin: 3px 0 0 3px; border: 1px solid #ccc; border-radius: 2px; display: flex; justify-content: space-between; font-size: 11px; line-height: 18px; padding-left: 3px; color: #72b0ab; }
.drop i { width: 18px; border-left: 1px solid #ddd; display: flex; align-items: center; justify-content: center; }
.drop i::before { content: ""; border: 3.5px solid transparent; border-top: 4px solid #5ea5a0; border-bottom: 0; }
.right .l2 { margin-top: 11px; }
.right .l3 { margin-top: 27px; }
.key { height: 20px; display: flex; align-items: center; padding-left: 4px; gap: 5px; font-size: 12px; font-weight: 300; letter-spacing: .25px; }
.solo { margin-top: 0; }
.sw { width: 13px; height: 13px; border: 1px solid #666; }
.c-sand { background: #bab3b4; } .c-brown { background: #b39887; } .c-purple { background: #c19bba; } .c-lilac { background: #dcbbd8; }
.c-gray { background: #9a9592; } .c-red { background: #ea7f81; } .c-green { background: #83ba7a; } .c-teal { background: #77b0ab; }
.c-blush { background: #fbd0df; } .c-pink { background: #dd94b0; } .c-orange { background: #f7ae60; } .c-gold { background: #c8b35c; }
.c-blue { background: #b6d7ee; } .c-stone { background: #cbc3c0; } .c-mint { background: #a2cdc6; } .c-peach { background: #e2c6bb; }
.count { margin: 16px 0 0 4px; font: 300 20px/28px "Open Sans", sans-serif; color: #777; letter-spacing: .6px; }
.numrow { height: 40px; margin-top: 10px; display: flex; padding-left: 12px; }
.num { width: 49px; height: 40px; font: 300 36px/52px "Open Sans", sans-serif; letter-spacing: 1.6px; }
.right .l4 { margin-top: 8px; }
.legend { display: grid; grid-template-columns: 120px 120px 120px; }
.hbar { margin-top: 2px; }

.tabs { height: 31px; display: grid; grid-template-columns: 131px 56px 200px 200px 83px 116px 102px 104px 104px 104px 70px 32px 32px 32px; border-top: 1px solid #ccc; background: #e6e6e6; font: 12px Inter, sans-serif; letter-spacing: -.14px; color: #666; }
.tabs div { display: flex; align-items: center; gap: 5px; padding-left: 5px; border-right: 1px solid #ccc; border-bottom: 1px solid #ccc; overflow: hidden; }
.tabs .t1 { padding-left: 9px; }
.tabs .t2 { padding-left: 2px; }
.tabs .act { background: #fafafa; color: #444; font-weight: 600; letter-spacing: -.1px; padding: 0 0 2px 7px; }
.tabs .act ~ div { padding-left: 7px; letter-spacing: -.1px; }
.tabs .act ~ div.story { letter-spacing: -.15px; }
.tabs div.new { padding-left: 8px; }
.status { height: 20px; background: #ebebeb; display: flex; align-items: center; font: 11px Inter, sans-serif; letter-spacing: -.08px; color: #111; padding-left: 3px; }
.m1 { width: 64px; } .m2 { width: 106px; } .m3 { width: 826px; }
.user { width: 128px; height: 20px; border: 1px solid #ccc; border-width: 0 1px; display: flex; align-items: center; gap: 9px; padding-left: 6px; letter-spacing: -.1px; }
.blk { border: 4px solid transparent; border-top: 5px solid #111; border-bottom: 0; }
.cell { width: 27px; height: 20px; border-right: 1px solid #ccc; }
.cell3 { width: 46px; }

.taskbar { height: 40px; background: linear-gradient(90deg, #233740, #27383f 45%, #2c3537 72%, #1d2c33); display: flex; color: #fff; font-family: "Open Sans", sans-serif; }
.search { width: 288px; background: #323232; border: 1px solid #606060; display: flex; align-items: center; gap: 10px; padding-left: 11px; font-size: 15px; letter-spacing: -.35px; color: #ddd; }
.ava { font: 700 8px "Noto Sans", sans-serif; fill: #fff; }
.bd { font: 9px "Noto Sans", sans-serif; fill: #fff; }
.bd2 { font: 12px "Noto Sans", sans-serif; fill: #fff; }
.tray { flex: 1; display: flex; align-items: center; padding-left: 256px; }
.temp { width: 104px; padding-left: 5px; margin-right: 5px; font-size: 14px; letter-spacing: -.2px; }
.lang { width: 35px; text-align: center; font-size: 12px; line-height: 17px; letter-spacing: -.55px; }
.clock { width: 66px; display: flex; flex-direction: column; align-items: center; font-size: 12px; line-height: 18px; letter-spacing: -.45px; }
.note { margin-left: 8px; }
.peekline { width: 1px; height: 40px; margin-left: auto; margin-right: 3px; background: #6b777c; }
```
